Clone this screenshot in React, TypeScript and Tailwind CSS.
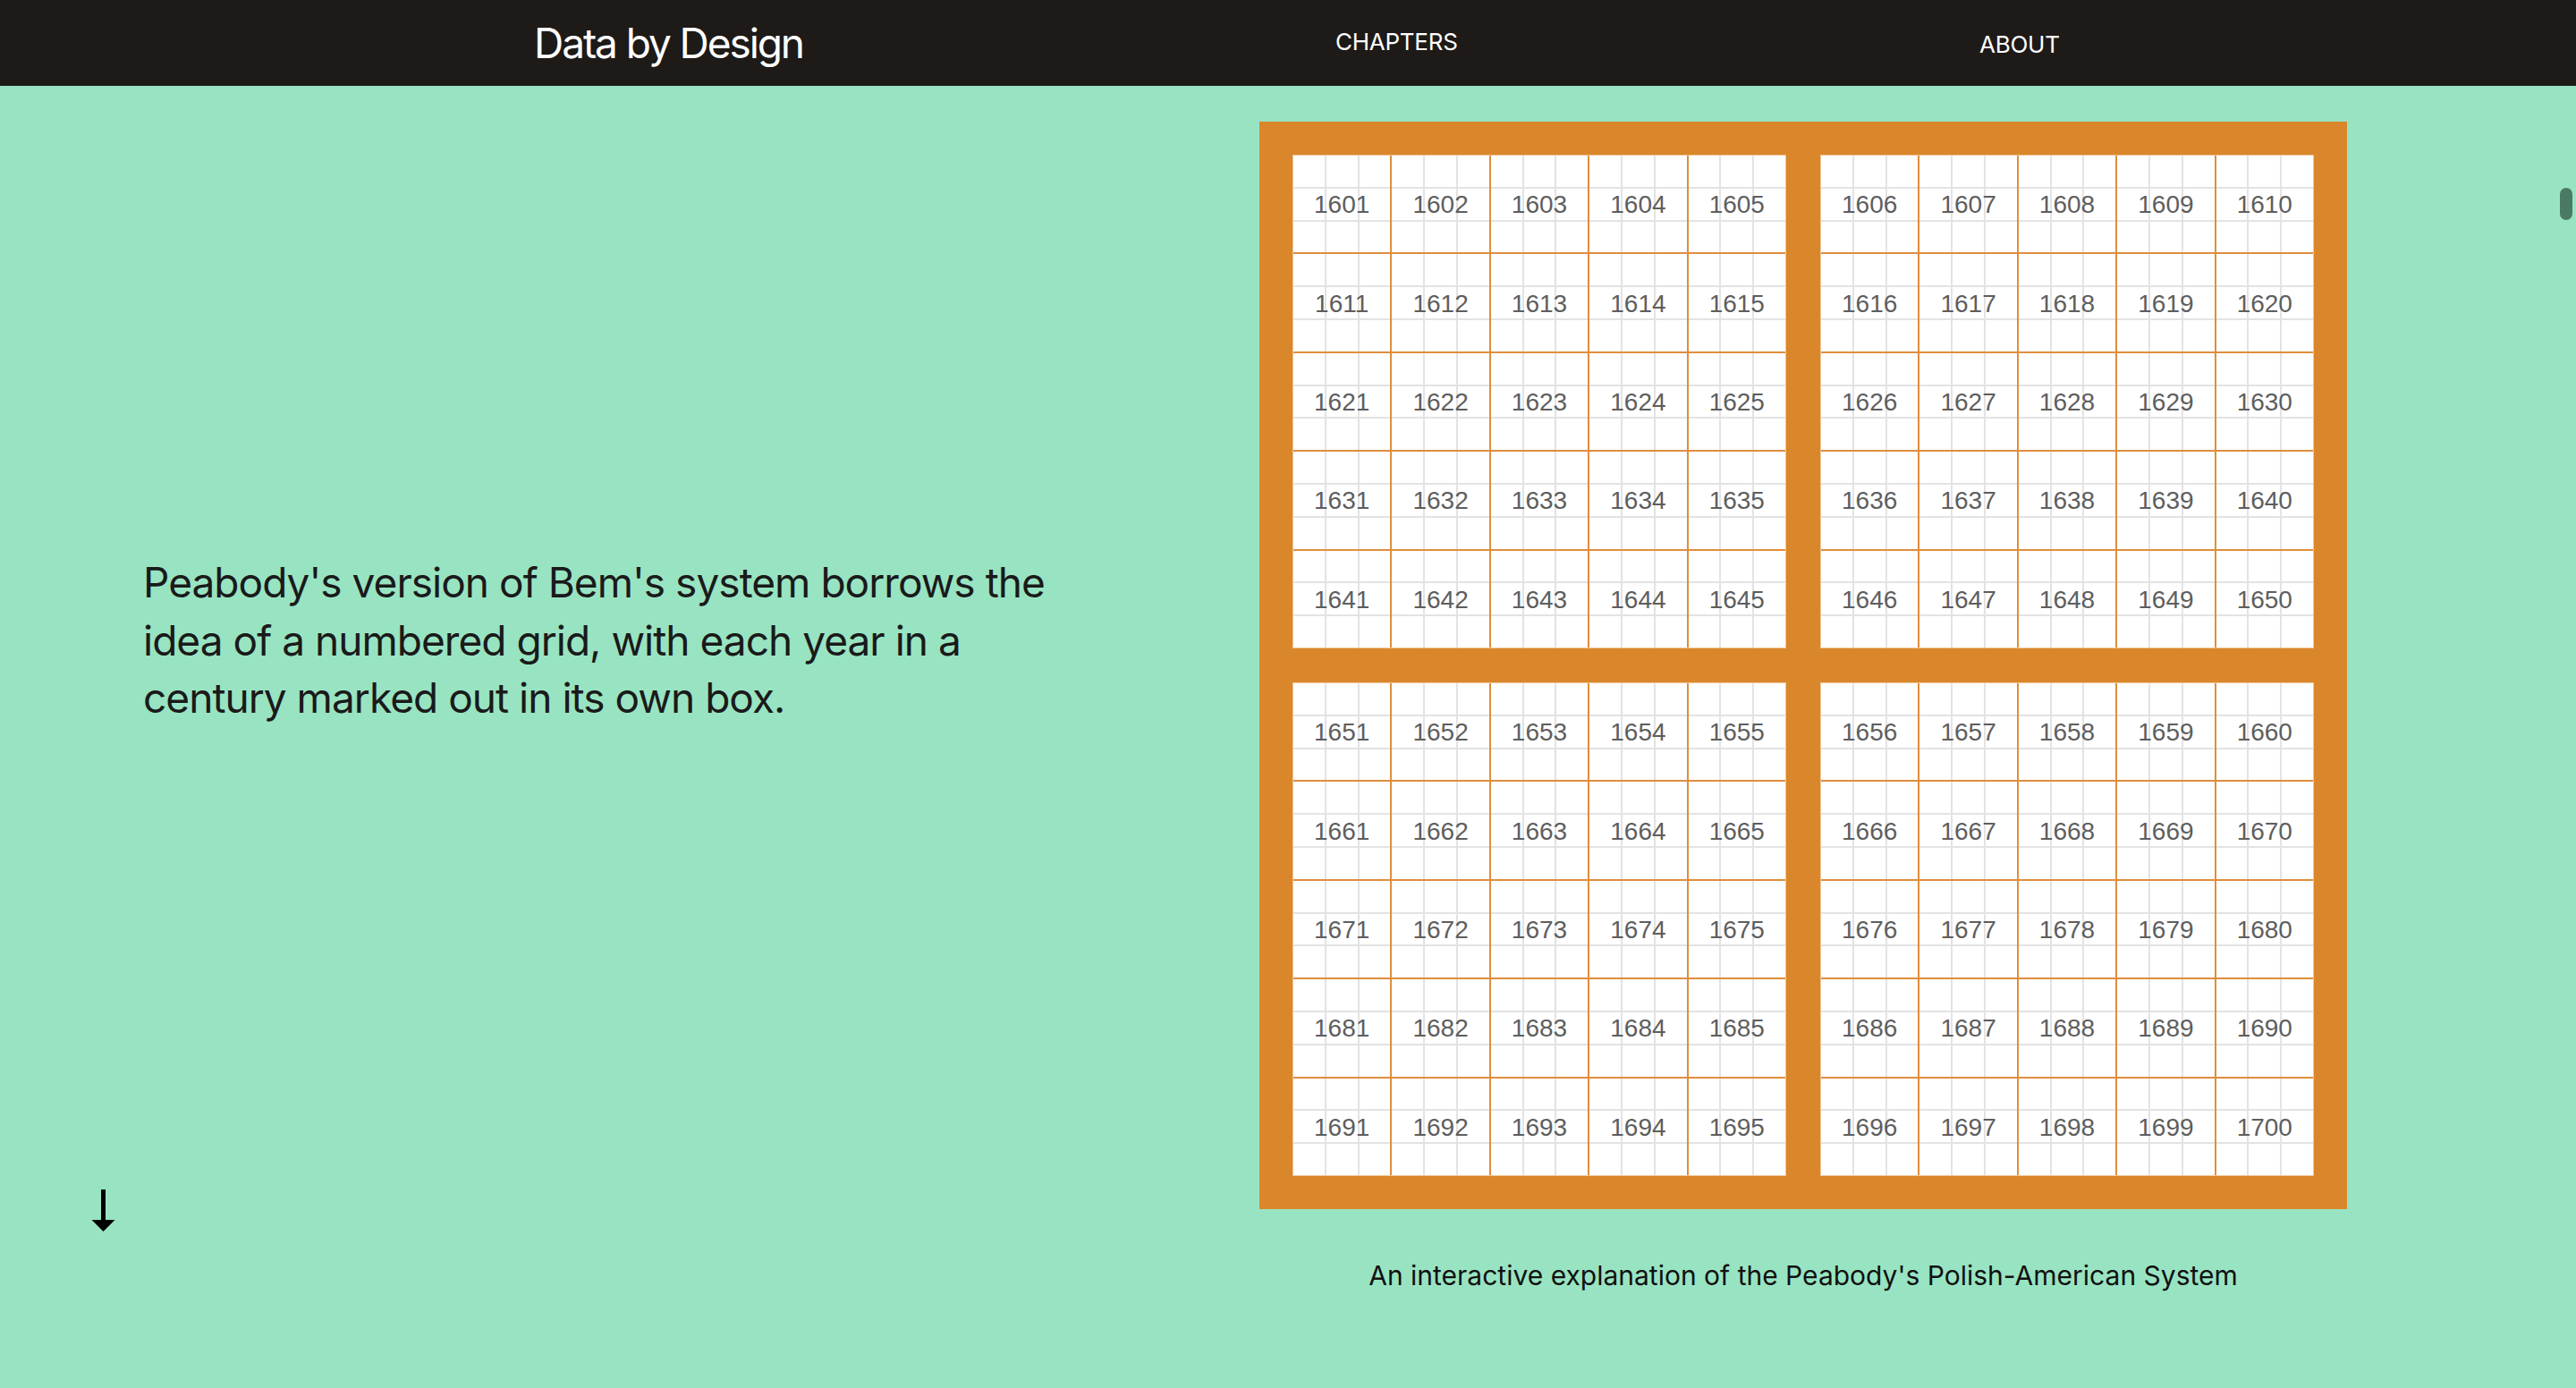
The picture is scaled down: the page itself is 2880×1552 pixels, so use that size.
import React from "react";

const sans = "font-['Inter','Liberation_Sans',sans-serif]";

function Cell({ year }: { year: number }) {
  return (
    <div className="relative bg-white">
      <div className="grid h-full w-full grid-cols-3 grid-rows-3 gap-[2px] bg-[#e3e3e3]">
        {Array.from({ length: 9 }).map((_, i) => (
          <div key={i} className="bg-white" />
        ))}
      </div>
      <div className="absolute inset-0 flex items-center justify-center pt-[2px] font-['Liberation_Sans','Arial',sans-serif] text-[28px] text-[#5e5e5e]">
        {year}
      </div>
    </div>
  );
}

function Block({ start }: { start: number }) {
  const years: number[] = [];
  for (let r = 0; r < 5; r++) {
    for (let c = 0; c < 5; c++) {
      years.push(start + r * 10 + c);
    }
  }
  return (
    <div className="grid h-[552px] w-[552px] grid-cols-5 grid-rows-5 gap-[2px] border border-[#f1c79a] bg-[#df8e3d]">
      {years.map((y) => (
        <Cell key={y} year={y} />
      ))}
    </div>
  );
}

export default function App() {
  return (
    <div className={`relative h-[1552px] w-full overflow-hidden bg-[#98e4c2] ${sans}`}>
      <header className="flex h-[96px] items-center bg-[#1d1a18] text-white">
        <div className="w-[1493px] pl-[597px]">
          <span className="text-[46px] leading-none tracking-[-0.045em]">Data by Design</span>
        </div>
        <div className="w-[720px]">
          <span className="text-[26px] leading-none tracking-[-0.01em]">CHAPTERS</span>
        </div>
        <div className="mt-[6px]">
          <span className="text-[26px] leading-none tracking-[-0.01em]">ABOUT</span>
        </div>
      </header>

      <main className="flex">
        <section className="flex w-[1408px] flex-col">
          <p className="pl-[160px] pt-[523px] text-[46px] leading-[64.5px] tracking-[-0.021em] text-[#1a1a1a] whitespace-nowrap">
            Peabody's version of Bem's system borrows the
            <br />
            idea of a numbered grid, with each year in a
            <br />
            century marked out in its own box.
          </p>
          <div className="mt-[517px] pl-[102px]">
            <svg width="27" height="48" viewBox="0 0 27 48">
              <rect x="11" y="0" width="5" height="35" fill="#000" />
              <polygon points="0.5,34 26.5,34 13.5,47" fill="#000" />
            </svg>
          </div>
        </section>

        <section className="flex w-[1216px] flex-col pt-[40px]">
          <div className="grid h-[1216px] w-[1216px] grid-cols-[552px_552px] grid-rows-[552px_552px] gap-[38px] bg-[#da872b] p-[37px]">
            <Block start={1601} />
            <Block start={1606} />
            <Block start={1651} />
            <Block start={1656} />
          </div>
          <p className="mt-[54px] text-center text-[30px] leading-[40px] tracking-normal text-[#111]">
            An interactive explanation of the Peabody's Polish-American System
          </p>
        </section>
      </main>

      <div className="absolute right-[4px] top-[210px] h-[36px] w-[14px] rounded-full bg-[#4b7a64]" />
    </div>
  );
}
